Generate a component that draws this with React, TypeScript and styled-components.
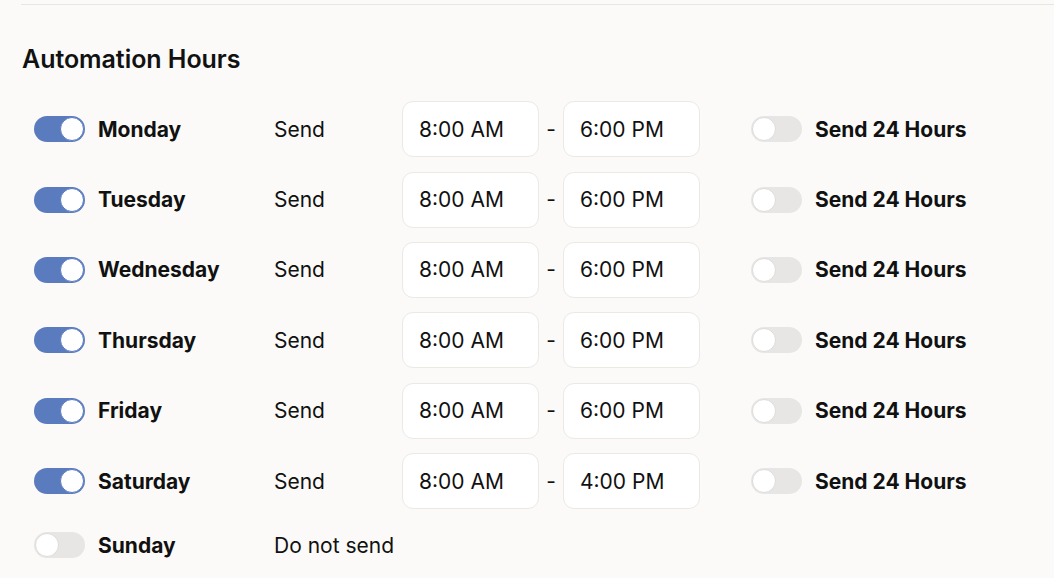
import styled, { createGlobalStyle } from 'styled-components'

interface DaySchedule {
  day: string
  enabled: boolean
  start?: string
  end?: string
}

const schedule: DaySchedule[] = [
  { day: 'Monday', enabled: true, start: '8:00 AM', end: '6:00 PM' },
  { day: 'Tuesday', enabled: true, start: '8:00 AM', end: '6:00 PM' },
  { day: 'Wednesday', enabled: true, start: '8:00 AM', end: '6:00 PM' },
  { day: 'Thursday', enabled: true, start: '8:00 AM', end: '6:00 PM' },
  { day: 'Friday', enabled: true, start: '8:00 AM', end: '6:00 PM' },
  { day: 'Saturday', enabled: true, start: '8:00 AM', end: '4:00 PM' },
  { day: 'Sunday', enabled: false }
]

export default function App() {
  return (
    <>
      <GlobalStyle />
      <Page>
        <Divider />
        <Title>Automation Hours</Title>
        <Rows>
          {schedule.map(({ day, enabled, start, end }) => (
            <Row key={day} $compact={!enabled}>
              <DayCell>
                <Toggle $on={enabled}>
                  <Knob $on={enabled} />
                </Toggle>
                <DayName>{day}</DayName>
              </DayCell>
              <SendLabel>{enabled ? 'Send' : 'Do not send'}</SendLabel>
              {enabled && (
                <>
                  <TimeBox>{start}</TimeBox>
                  <Dash>-</Dash>
                  <TimeBox>{end}</TimeBox>
                  <AllDay>
                    <Toggle $on={false}>
                      <Knob $on={false} />
                    </Toggle>
                    <DayName>Send 24 Hours</DayName>
                  </AllDay>
                </>
              )}
            </Row>
          ))}
        </Rows>
      </Page>
    </>
  )
}

const GlobalStyle = createGlobalStyle`
  html, body {
    margin: 0;
    background: #fbfaf8;
  }
  body {
    font-family: Inter, "Liberation Sans", sans-serif;
    color: #111;
  }
`

const Page = styled.div`
  padding: 4px 0 0 21px;
  overflow: hidden;
  height: 578px;
  box-sizing: border-box;
`

const Divider = styled.div`
  height: 1px;
  background: #e8e6e2;
`

const Title = styled.h2`
  margin: 39px 0 27px 1px;
  font-size: 25px;
  line-height: 30px;
  font-weight: 600;
  letter-spacing: -0.05px;
`

const Rows = styled.div`
  display: flex;
  flex-direction: column;
  padding-left: 13px;
`

const Row = styled.div<{ $compact: boolean }>`
  display: flex;
  align-items: center;
  height: ${({ $compact }) => ($compact ? '40px' : '56.4px')};
  margin-bottom: 14px;
  margin-top: ${({ $compact }) => ($compact ? '2px' : '0')};
`

const DayCell = styled.div`
  display: flex;
  align-items: center;
  gap: 13px;
  width: 240px;
  flex-shrink: 0;
`

const Toggle = styled.div<{ $on: boolean }>`
  width: 51px;
  height: 26px;
  border-radius: 13px;
  background: ${({ $on }) => ($on ? '#5a7cbf' : '#e7e6e4')};
  display: flex;
  align-items: center;
  justify-content: ${({ $on }) => ($on ? 'flex-end' : 'flex-start')};
  padding: 0 1px;
  box-sizing: border-box;
  flex-shrink: 0;
`

const Knob = styled.div<{ $on: boolean }>`
  width: 24px;
  height: 24px;
  border-radius: 50%;
  background: #fff;
  border: 1.5px solid ${({ $on }) => ($on ? '#5a7cbf' : '#dddcda')};
  box-sizing: border-box;
`

const DayName = styled.span`
  font-size: 21px;
  font-weight: 700;
  white-space: nowrap;
`

const SendLabel = styled.span`
  width: 128px;
  flex-shrink: 0;
  font-size: 21px;
  font-weight: 400;
  white-space: nowrap;
`

const TimeBox = styled.div`
  width: 137px;
  height: 56px;
  box-sizing: border-box;
  background: #fff;
  border: 1px solid #ece9e5;
  border-radius: 11px;
  display: flex;
  align-items: center;
  padding-left: 16px;
  font-size: 21px;
  flex-shrink: 0;
`

const Dash = styled.span`
  width: 24px;
  text-align: center;
  font-size: 21px;
  flex-shrink: 0;
`

const AllDay = styled.div`
  display: flex;
  align-items: center;
  gap: 13px;
  margin-left: 51px;
`
